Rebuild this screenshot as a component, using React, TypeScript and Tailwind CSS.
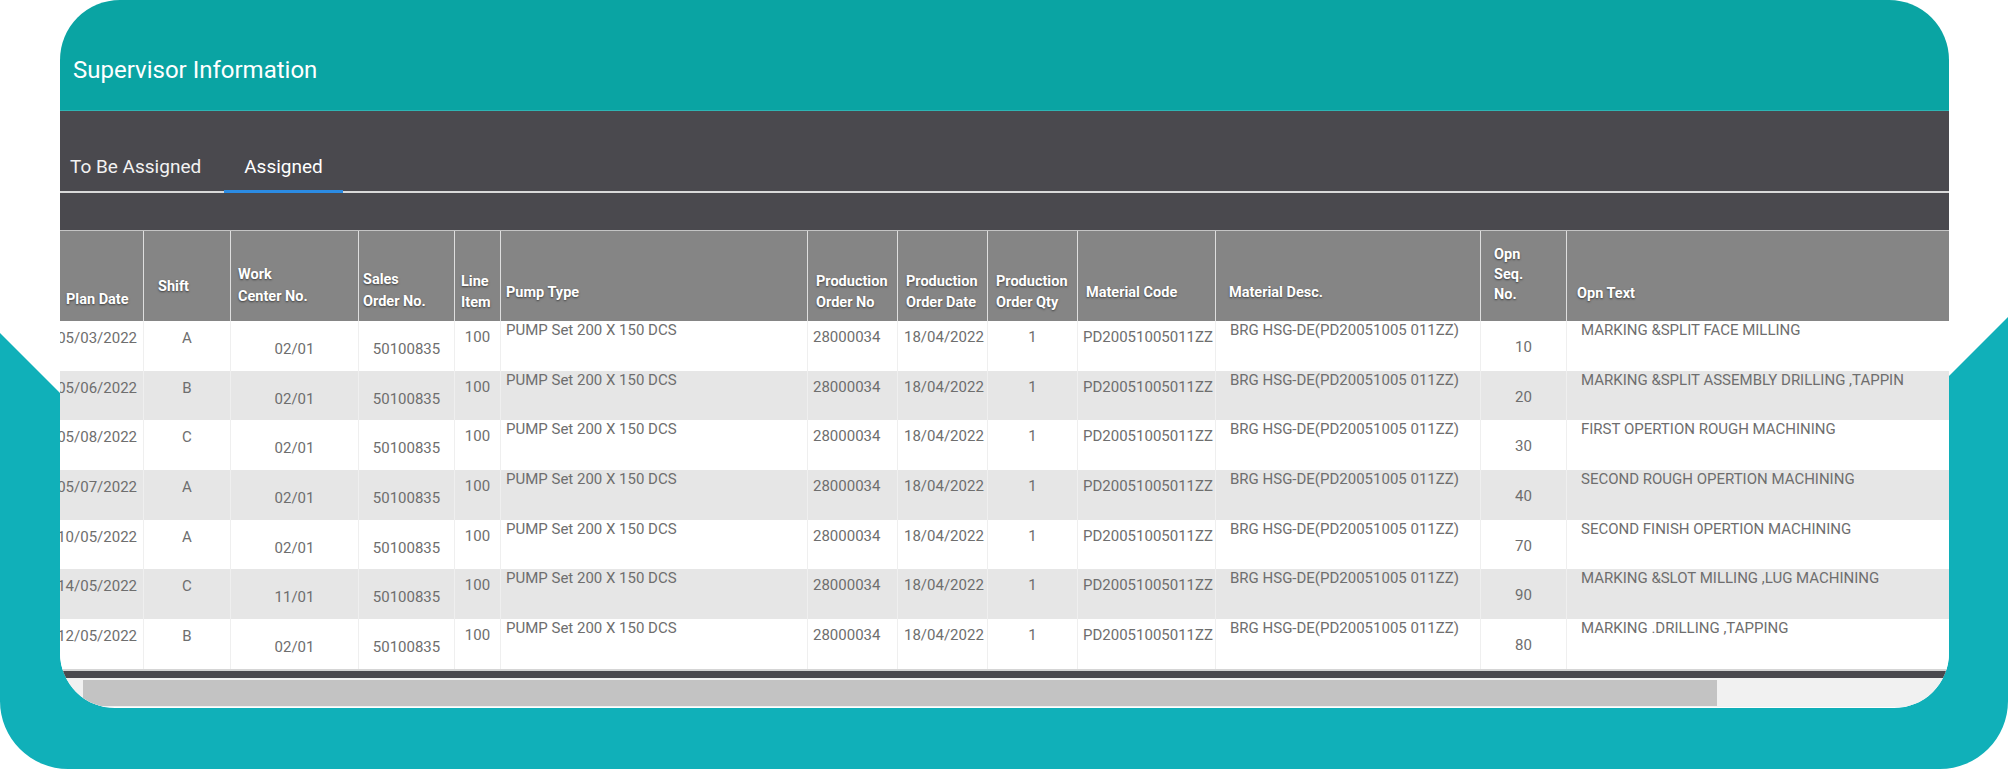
import React from 'react';

const grid =
  'grid grid-cols-[101px_87px_128px_96px_46px_307px_90px_90px_90px_138px_265px_86px_383px]';

const headers = [
  { lines: ['Plan Date'], cls: 'pl-[24px] pb-[11px] leading-[21px]' },
  { lines: ['Shift'], cls: 'pl-[14px] pb-[24px] leading-[21px]' },
  { lines: ['Work', 'Center No.'], cls: 'pl-[7px] pb-[13px] leading-[22px]' },
  { lines: ['Sales', 'Order No.'], cls: 'pl-[4px] pb-[8px] leading-[22px]' },
  { lines: ['Line', 'Item'], cls: 'pl-[6px] pb-[8px] leading-[21px]' },
  { lines: ['Pump Type'], cls: 'pl-[5px] pb-[18px] leading-[21px]' },
  { lines: ['Production', 'Order No'], cls: 'pl-[8px] pb-[8px] leading-[21px]' },
  { lines: ['Production', 'Order Date'], cls: 'pl-[8px] pb-[8px] leading-[21px]' },
  { lines: ['Production', 'Order Qty'], cls: 'pl-[8px] pb-[8px] leading-[21px]' },
  { lines: ['Material Code'], cls: 'pl-[8px] pb-[18px] leading-[21px]' },
  { lines: ['Material Desc.'], cls: 'pl-[13px] pb-[18px] leading-[21px]' },
  { lines: ['Opn', 'Seq.', 'No.'], cls: 'pl-[13px] pb-[16px] leading-[20px]' },
  { lines: ['Opn Text'], cls: 'pl-[10px] pb-[17px] leading-[21px]' },
];

// per column placement of the cell text
const cellCls = [
  'text-right pr-[6px] pt-[8px]',
  'text-center pt-[8px]',
  'text-center pt-[19px]',
  'text-center pt-[19px]',
  'text-center pt-[7px]',
  'pl-[5px] pt-0',
  'pl-[5px] pt-[7px]',
  'pl-[6px] pt-[7px]',
  'text-center pt-[7px]',
  'pl-[5px] pt-[7px]',
  'pl-[14px] pt-0',
  'text-center pt-[17px]',
  'pl-[14px] pt-0',
];

const rows = [
  ['05/03/2022', 'A', '02/01', '10', 'MARKING &SPLIT FACE MILLING'],
  ['05/06/2022', 'B', '02/01', '20', 'MARKING &SPLIT ASSEMBLY DRILLING ,TAPPIN'],
  ['05/08/2022', 'C', '02/01', '30', 'FIRST OPERTION ROUGH MACHINING'],
  ['05/07/2022', 'A', '02/01', '40', 'SECOND ROUGH OPERTION MACHINING'],
  ['10/05/2022', 'A', '02/01', '70', 'SECOND FINISH OPERTION MACHINING'],
  ['14/05/2022', 'C', '11/01', '90', 'MARKING &SLOT MILLING ,LUG MACHINING'],
  ['12/05/2022', 'B', '02/01', '80', 'MARKING .DRILLING ,TAPPING'],
];

const toCells = (r: string[]) => [
  r[0],
  r[1],
  r[2],
  '50100835',
  '100',
  'PUMP Set 200 X 150 DCS',
  '28000034',
  '18/04/2022',
  '1',
  'PD20051005011ZZ',
  'BRG HSG-DE(PD20051005 011ZZ)',
  r[3],
  r[4],
];

const Backdrop = () => (
  <svg className="absolute inset-0" width="2009" height="770" viewBox="0 0 2009 770">
    <path
      d="M0 333 L60 393 L1949 376 L2008 317 L2008 701 A68 68 0 0 1 1940 769 L68 769 A68 68 0 0 1 0 701 Z"
      fill="#10b0b9"
    />
  </svg>
);

const App = () => {
  return (
    <div className="relative w-[2009px] h-[770px] overflow-hidden bg-white font-['Roboto',sans-serif]">
      <Backdrop />

      <div className="relative ml-[60px] flex h-[708px] w-[1889px] flex-col overflow-hidden rounded-t-[60px] rounded-b-[55px] bg-white">
        {/* Title bar */}
        <div className="h-[111px] shrink-0 border-b border-[#2db5b4] bg-[#0aa4a3] pl-[13px] pt-[56px]">
          <h1 className="text-[24px] leading-[28px] text-white">Supervisor Information</h1>
        </div>

        {/* Tabs */}
        <div className="shrink-0 bg-[#4a494e]">
          <div className="flex h-[82px] items-end border-b-2 border-[#d9d9d9]">
            <button className="pb-[12px] pl-[10px] pr-[23px] text-[19px] leading-[24px] text-[#f2f2f2]">
              To Be Assigned
            </button>
            <button className="-mb-[2px] border-b-[3px] border-[#2b8be3] px-[20px] pb-[11px] text-[19px] leading-[24px] text-white">
              Assigned
            </button>
          </div>
          <div className="h-[37px]" />
        </div>

        {/* Table, scrolled a little to the right */}
        <div className="shrink-0 overflow-hidden">
          <div className="-ml-[18px] w-[1907px]">
            <div className={`${grid} h-[91px] border-t border-[#c4c4c4] bg-[#858585]`}>
              {headers.map((h, i) => (
                <div
                  key={i}
                  className={`flex flex-col justify-end whitespace-nowrap text-[14.5px] font-bold text-white [text-shadow:0_1px_2px_rgba(0,0,0,0.55)] ${
                    i > 0 ? 'border-l border-[#dedede]' : ''
                  } ${h.cls}`}
                >
                  {h.lines.map((l) => (
                    <span key={l}>{l}</span>
                  ))}
                </div>
              ))}
            </div>

            {rows.map((r, ri) => (
              <div
                key={ri}
                className={`${grid} h-[49.7px] ${ri % 2 === 1 ? 'bg-[#e6e6e6]' : 'bg-white'}`}
              >
                {toCells(r).map((c, ci) => (
                  <div
                    key={ci}
                    className={`overflow-hidden whitespace-nowrap text-[15px] leading-[18px] text-[#6e6e6e] ${
                      ci > 0 ? 'border-l border-[#efefef]' : ''
                    } ${cellCls[ci]}`}
                  >
                    {c}
                  </div>
                ))}
              </div>
            ))}
          </div>
        </div>

        {/* Horizontal scrollbar */}
        <div className="h-[2px] shrink-0 bg-[#d5d5d5]" />
        <div className="h-[7px] shrink-0 bg-[#4a494e]" />
        <div className="flex h-[29px] shrink-0 bg-[#f1f1f1] pb-[1px] pl-[23px] pt-[2px]">
          <div className="w-[1634px] bg-[#c3c3c3]" />
        </div>
      </div>
    </div>
  );
};

export default App;
